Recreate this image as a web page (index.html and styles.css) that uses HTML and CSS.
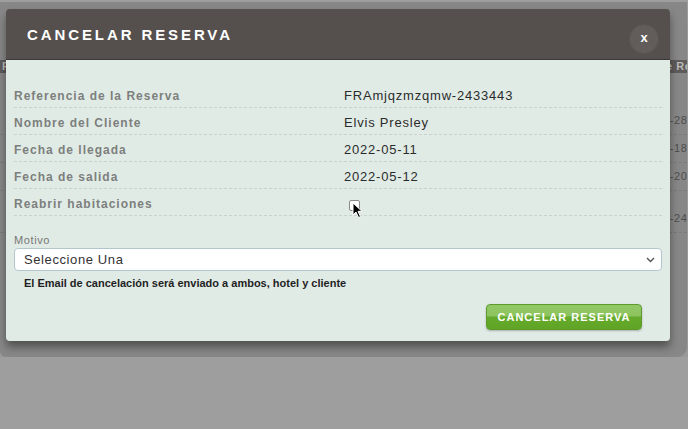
FILE: index.html
```html
<!DOCTYPE html>
<html lang="es">
  <head>
    <meta charset="UTF-8">
    <meta name="viewport" content="width=device-width, initial-scale=1.0">
    <title>Cancelar Reserva</title>
    <link rel="stylesheet" href="styles.css">
  </head>
<body>
  <div class="pagina">
    <div class="tabla">
      <div class="tabla-cabecera">
        <span class="celda-ref">F</span>
        <span class="celda-fecha">Fecha de Reserva</span>
      </div>
      <div class="tabla-fila fila-1"><span class="celda-ref"></span><span class="celda-fecha">2022-05-28</span></div>
      <div class="tabla-fila"><span class="celda-ref"></span><span class="celda-fecha">2022-05-18</span></div>
      <div class="tabla-fila"><span class="celda-ref"></span><span class="celda-fecha">2022-05-20</span></div>
      <div class="tabla-fila fila-4"><span class="celda-ref"></span><span class="celda-fecha">2022-05-24</span></div>
    </div>
  </div>

  <div class="modal">
    <div class="modal-cabecera">
      <h1>CANCELAR RESERVA</h1>
      <span class="cerrar">x</span>
    </div>

    <div class="modal-cuerpo">
      <div class="fila">
        <span class="etiqueta">Referencia de la Reserva</span>
        <span class="valor">FRAmjqzmzqmw-2433443</span>
      </div>
      <div class="fila">
        <span class="etiqueta">Nombre del Cliente</span>
        <span class="valor">Elvis Presley</span>
      </div>
      <div class="fila">
        <span class="etiqueta">Fecha de llegada</span>
        <span class="valor">2022-05-11</span>
      </div>
      <div class="fila">
        <span class="etiqueta">Fecha de salida</span>
        <span class="valor">2022-05-12</span>
      </div>
      <div class="fila">
        <span class="etiqueta">Reabrir habitaciones</span>
        <span class="valor">
          <span class="casilla">
            <svg class="cursor" width="11" height="17" viewBox="0 0 11 17">
              <path d="M1 1 L1 13 L4 10 L6.5 15.5 L8.5 14.6 L6 9.3 L10 9.3 Z" fill="#000" stroke="#fff" stroke-width="1"/>
            </svg>
          </span>
        </span>
      </div>

      <label class="motivo">Motivo</label>
      <div class="selector">
        <span>Seleccione Una</span>
        <svg width="9" height="6" viewBox="0 0 9 6">
          <path d="M1 1 L4.5 4.5 L8 1" fill="none" stroke="#555" stroke-width="1.4"/>
        </svg>
      </div>
      <p class="aviso">El Email de cancelación será enviado a ambos, hotel y cliente</p>

      <div class="acciones">
        <button class="boton-cancelar">CANCELAR RESERVA</button>
      </div>
    </div>
  </div>
</body>
</html>
```

FILE: styles.css
```css
  :root {
    --color-cabecera: #554f4d;
    --color-cuerpo: #e1ebe6;
    --color-etiqueta: #7c7f7d;
    --color-texto: #2b2b2b;
    --color-verde: #65aa2b;
  }

  body {
    margin: 0;
    background-color: #9e9e9e;
    font-family: 'Liberation Sans', Arial, sans-serif;
    color: var(--color-texto);
  }

  /* pagina de fondo, oscurecida detras del modal */
  .pagina {
    height: 355px;
    margin: 2px 1px 0 0;
    background-color: #878787;
    border-radius: 0 0 10px 6px;
    box-shadow: 0 12px 12px rgba(0,0,0,0.06);
    overflow: hidden;
  }

  .tabla {
    padding-top: 58px;
    font-size: 11px;
    letter-spacing: 0.5px;
  }

  .tabla-cabecera,
  .tabla-fila {
    display: flex;
    white-space: nowrap;
  }

  .tabla-cabecera {
    height: 13px;
    line-height: 13px;
    background-color: #5e5b5a;
    color: #b9b9b9;
    font-weight: bold;
  }

  .tabla-cabecera .celda-fecha {
    margin-left: -5px;
  }

  .tabla-fila {
    height: 27px;
    line-height: 27px;
    color: #4e4e4e;
    border-bottom: 1px dashed #7a7a7a;
  }

  .fila-1 {
    margin-top: 34px;
  }

  .fila-4 {
    margin-top: 14px;
  }

  .celda-ref {
    flex: none;
    width: 619px;
    padding-left: 2px;
    overflow: hidden;
  }

  .celda-fecha {
    flex: none;
    padding-left: 4px;
    border-left: 1px solid #7b7b7b;
  }

  /* modal */
  .modal {
    position: absolute;
    left: 6px;
    top: 9px;
    width: 664px;
    border-radius: 4px;
    overflow: hidden;
    box-shadow: 0 6px 8px rgba(0,0,0,0.4);
  }

  .modal-cabecera {
    height: 50px;
    background-color: var(--color-cabecera);
    border-bottom: 1px solid #3d3938;
    display: flex;
    align-items: center;
    justify-content: space-between;
    padding: 0 11px 0 21px;
  }

  .modal-cabecera h1 {
    margin: 0;
    color: white;
    font-size: 15px;
    letter-spacing: 2.9px;
  }

  .cerrar {
    width: 30px;
    height: 30px;
    margin-top: 9px;
    border-radius: 50%;
    background-color: #625c5a;
    border: 1px solid #5a5452;
    color: white;
    font-weight: bold;
    font-size: 13px;
    display: flex;
    align-items: center;
    justify-content: center;
    padding-bottom: 3px;
    box-sizing: border-box;
  }

  .modal-cuerpo {
    background-color: var(--color-cuerpo);
    padding: 21px 8px 11px 8px;
  }

  .fila {
    display: grid;
    grid-template-columns: 330px 1fr;
    height: 16px;
    line-height: 16px;
    padding: 7px 0 3px;
    border-bottom: 1px dashed #c9d2ce;
  }

  .etiqueta {
    color: var(--color-etiqueta);
    font-weight: bold;
    font-size: 12px;
    letter-spacing: 1px;
  }

  .valor {
    font-size: 13px;
    letter-spacing: 0.8px;
  }

  .casilla {
    display: inline-block;
    position: relative;
    width: 9px;
    height: 9px;
    margin: 4px 0 0 5px;
    border: 1px solid #8a8a8a;
    border-radius: 2px;
    background: white;
  }

  .cursor {
    position: absolute;
    left: 2px;
    top: 1px;
  }

  .motivo {
    display: block;
    margin-top: 17px;
    font-size: 11px;
    line-height: 14px;
    color: #777;
    letter-spacing: 0.6px;
  }

  .selector {
    margin-top: 1px;
    height: 21px;
    background: white;
    border: 1px solid #b4c6cd;
    border-radius: 4px;
    display: flex;
    align-items: center;
    justify-content: space-between;
    padding: 0 6px 0 9px;
    font-size: 13px;
    letter-spacing: 0.6px;
    color: #333;
  }

  .aviso {
    margin: 5px 0 0 10px;
    font-size: 11px;
    line-height: 14px;
    font-weight: bold;
    color: #1f1f1f;
  }

  .acciones {
    display: flex;
    justify-content: flex-end;
    margin-top: 14px;
    padding-right: 20px;
  }

  .boton-cancelar {
    width: 156px;
    height: 26px;
    border: 1px solid #5c9a2c;
    border-radius: 4px;
    background: linear-gradient(#93c867 0%, #8dc45e 45%, #67ab2d 50%, #60a426 100%);
    color: white;
    font-family: inherit;
    font-weight: bold;
    font-size: 11px;
    letter-spacing: 1px;
    box-shadow: 0 1px 2px rgba(0,0,0,0.25);
    cursor: pointer;
  }
```
